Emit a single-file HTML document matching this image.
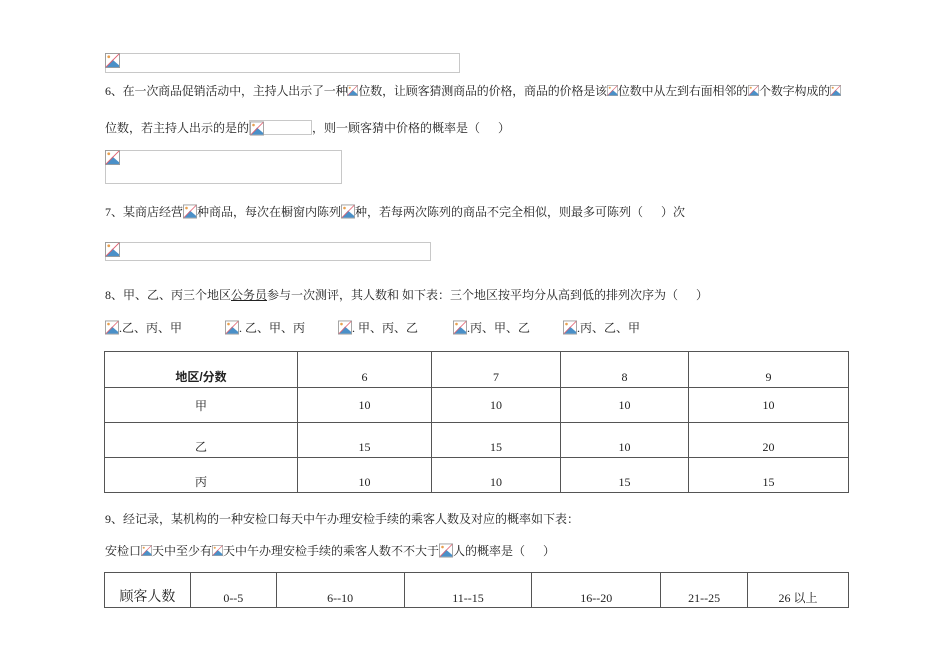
<!DOCTYPE html>
<html><head><meta charset="utf-8">
<style>
body{margin:0;width:950px;height:672px;background:#fff;position:relative;overflow:hidden;font-family:"Liberation Serif","Noto Serif CJK SC",serif;font-size:12px;color:#222}
.a{position:absolute;white-space:nowrap;line-height:14px}
.box{position:absolute;border:1px solid #c8c8c8;box-sizing:border-box}
.ic{display:inline-block;width:14px;height:15px;vertical-align:-3px}
.icn{display:inline-block;width:11px;height:15px;vertical-align:-3px}
table{position:absolute;border-collapse:collapse;font-size:12px}
td{border:1px solid #555;text-align:center;padding:0}
</style></head><body>
<svg width="0" height="0" style="position:absolute"><defs>
<symbol id="i" viewBox="0 0 16 16"><rect x="0.5" y="0.5" width="15" height="15" fill="#fff" stroke="#999"/><path d="M1 15 L8 7 L15 13 V15Z" fill="#4a90c8"/><circle cx="4" cy="4" r="1.5" fill="#e8a050"/><path d="M1 15 L15 1" stroke="#e06070" stroke-width="1"/></symbol>
</defs></svg>

<div class="box" style="left:105px;top:53px;width:355px;height:20px"></div>
<svg class="a" style="left:105px;top:53px" width="15" height="15"><use href="#i"/></svg>

<div class="a" style="left:105px;top:83px;letter-spacing:-0.17px">6、在一次商品促销活动中，主持人出示了一种<svg class="icn"><use href="#i"/></svg>位数，让顾客猜测商品的价格，商品的价格是该<svg class="icn"><use href="#i"/></svg>位数中从左到右面相邻的<svg class="icn"><use href="#i"/></svg>个数字构成的<svg class="icn"><use href="#i"/></svg></div>

<div class="a" style="left:105px;top:120px">位数，若主持人出示的是的<span style="display:inline-block;width:63px;height:15px;border:1px solid #c8c8c8;vertical-align:-3px;box-sizing:border-box;position:relative"><svg class="ic" style="position:absolute;left:0;top:0"><use href="#i"/></svg></span>，则一顾客猜中价格的概率是（&nbsp;&nbsp;&nbsp;&nbsp;&nbsp;&nbsp;）</div>

<div class="box" style="left:105px;top:150px;width:237px;height:34px"></div>
<svg class="a" style="left:105px;top:150px" width="15" height="15"><use href="#i"/></svg>

<div class="a" style="left:105px;top:204px">7、某商店经营<svg class="ic"><use href="#i"/></svg>种商品，每次在橱窗内陈列<svg class="ic"><use href="#i"/></svg>种，若每两次陈列的商品不完全相似，则最多可陈列（&nbsp;&nbsp;&nbsp;&nbsp;&nbsp;&nbsp;）次</div>

<div class="box" style="left:105px;top:242px;width:326px;height:19px"></div>
<svg class="a" style="left:105px;top:242px" width="15" height="15"><use href="#i"/></svg>

<div class="a" style="left:105px;top:288px">8、甲、乙、丙三个地区<u>公务员</u>参与一次测评，其人数和 如下表：三个地区按平均分从高到低的排列次序为（&nbsp;&nbsp;&nbsp;&nbsp;&nbsp;&nbsp;）</div>

<div class="a" style="left:105px;top:320px"><svg class="ic"><use href="#i"/></svg>.乙、丙、甲</div>
<div class="a" style="left:225px;top:320px"><svg class="ic"><use href="#i"/></svg>. 乙、甲、丙</div>
<div class="a" style="left:338px;top:320px"><svg class="ic"><use href="#i"/></svg>. 甲、丙、乙</div>
<div class="a" style="left:453px;top:320px"><svg class="ic"><use href="#i"/></svg>.丙、甲、乙</div>
<div class="a" style="left:563px;top:320px"><svg class="ic"><use href="#i"/></svg>.丙、乙、甲</div>

<table style="left:104px;top:351px;width:745px">
<colgroup><col style="width:193px"><col style="width:134px"><col style="width:129px"><col style="width:128px"><col style="width:160px"></colgroup>
<tr style="height:36px"><td style="vertical-align:bottom;padding-bottom:2px;font-family:'Liberation Sans','Noto Sans CJK SC',sans-serif;font-weight:bold">地区/分数</td><td style="vertical-align:bottom;padding-bottom:2px">6</td><td style="vertical-align:bottom;padding-bottom:2px">7</td><td style="vertical-align:bottom;padding-bottom:2px">8</td><td style="vertical-align:bottom;padding-bottom:2px">9</td></tr>
<tr style="height:35px"><td>甲</td><td>10</td><td>10</td><td>10</td><td>10</td></tr>
<tr style="height:35px"><td style="vertical-align:bottom;padding-bottom:2px">乙</td><td style="vertical-align:bottom;padding-bottom:2px">15</td><td style="vertical-align:bottom;padding-bottom:2px">15</td><td style="vertical-align:bottom;padding-bottom:2px">10</td><td style="vertical-align:bottom;padding-bottom:2px">20</td></tr>
<tr style="height:35px"><td style="vertical-align:bottom;padding-bottom:2px">丙</td><td style="vertical-align:bottom;padding-bottom:2px">10</td><td style="vertical-align:bottom;padding-bottom:2px">10</td><td style="vertical-align:bottom;padding-bottom:2px">15</td><td style="vertical-align:bottom;padding-bottom:2px">15</td></tr>
</table>

<div class="a" style="left:105px;top:512px">9、经记录，某机构的一种安检口每天中午办理安检手续的乘客人数及对应的概率如下表：</div>
<div class="a" style="left:105px;top:543px">安检口<svg class="icn"><use href="#i"/></svg>天中至少有<svg class="icn"><use href="#i"/></svg>天中午办理安检手续的乘客人数不不大于<svg class="ic"><use href="#i"/></svg>人的概率是（&nbsp;&nbsp;&nbsp;&nbsp;&nbsp;&nbsp;）</div>

<table style="left:104px;top:572px;width:745px">
<colgroup><col style="width:86px"><col style="width:86px"><col style="width:128px"><col style="width:128px"><col style="width:129px"><col style="width:87px"><col style="width:101px"></colgroup>
<tr style="height:35px"><td style="vertical-align:bottom;padding-bottom:1px;font-size:14px">顾客人数</td><td style="vertical-align:bottom;padding-bottom:1px">0--5</td><td style="vertical-align:bottom;padding-bottom:1px">6--10</td><td style="vertical-align:bottom;padding-bottom:1px">11--15</td><td style="vertical-align:bottom;padding-bottom:1px">16--20</td><td style="vertical-align:bottom;padding-bottom:1px">21--25</td><td style="vertical-align:bottom;padding-bottom:1px">26 以上</td></tr>
</table>
</body></html>
